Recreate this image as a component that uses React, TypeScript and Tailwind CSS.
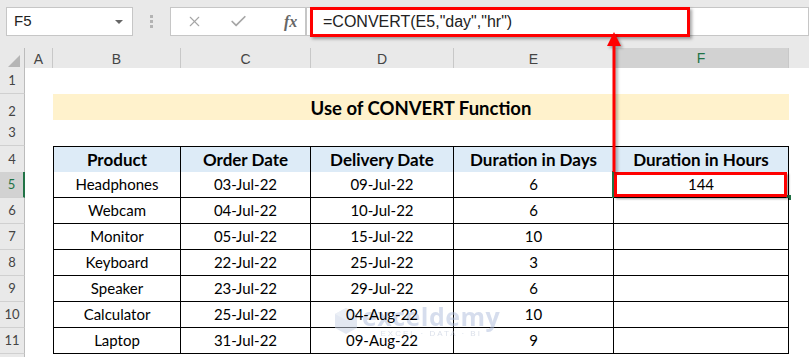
import { X, Check } from 'lucide-react';

const rows = [
    ['Headphones', '03-Jul-22', '09-Jul-22', '6', '144'],
    ['Webcam', '04-Jul-22', '10-Jul-22', '6', ''],
    ['Monitor', '05-Jul-22', '15-Jul-22', '10', ''],
    ['Keyboard', '22-Jul-22', '25-Jul-22', '3', ''],
    ['Speaker', '23-Jul-22', '29-Jul-22', '6', ''],
    ['Calculator', '25-Jul-22', '04-Aug-22', '10', ''],
    ['Laptop', '31-Jul-22', '09-Aug-22', '9', ''],
];

const cols = ['A', 'B', 'C', 'D', 'E', 'F'];

const grid = 'grid grid-cols-[25px_28px_128px_130px_143px_160px_175px_1fr]';

function RowHead({ n, active }: { n?: number; active?: boolean }) {
    return (
        <div
            className={`flex items-end justify-center pb-[3px] border-b border-[#d0d0d0] text-[13px] ${
                active
                    ? 'bg-[#d2d2d2] border-r-2 border-r-[#217346] text-[#217346]'
                    : 'bg-[#e9e9e9] border-r border-r-[#bcbcbc] text-[#444]'
            }`}
        >
            {n}
        </div>
    );
}

export default function App() {
    return (
        <div
            className="relative w-[809px] h-[357px] overflow-hidden bg-[#e9e9e9]"
            style={{ fontFamily: '"Liberation Sans", Arial, sans-serif' }}
        >
            {/* formula bar */}
            <div className="h-[48px] flex items-start pt-[7px] pl-[6px]">
                <div className="w-[127px] h-[29px] bg-white border border-[#c6c6c6] flex items-center justify-between pl-[7px] pr-[9px]">
                    <span className="text-[15px] text-[#222]">F5</span>
                    <span className="w-0 h-0 border-l-[4px] border-r-[4px] border-t-[4px] border-l-transparent border-r-transparent border-t-[#666]"></span>
                </div>
                <div className="w-[37px] h-[29px] flex flex-col items-center justify-center gap-[2px]">
                    <span className="w-[3px] h-[3px] bg-[#b3b3b3]"></span>
                    <span className="w-[3px] h-[3px] bg-[#b3b3b3]"></span>
                    <span className="w-[3px] h-[3px] bg-[#b3b3b3]"></span>
                </div>
                <div className="w-[136px] h-[29px] bg-white border border-[#c6c6c6] flex items-center pl-[15px] gap-[26px]">
                    <X size={17} strokeWidth={1.6} className="text-[#a6a6a6]" />
                    <Check size={19} strokeWidth={2.2} className="text-[#a6a6a6]" />
                    <span
                        className="text-[16px] italic font-bold text-[#666] ml-[10px]"
                        style={{ fontFamily: '"Liberation Serif", serif' }}
                    >
                        fx
                    </span>
                </div>
                <div className="flex-1 h-[29px] bg-white border border-[#c6c6c6] flex items-center pl-[16px] text-[16px] text-[#222]">
                    =CONVERT(E5,"day","hr")
                </div>
            </div>

            {/* column headers */}
            <div className={`${grid} h-[20px] text-[14px] text-[#444]`}>
                <div className="border-r border-[#bcbcbc] flex items-end justify-end">
                    <svg width="14" height="14" className="mr-[3px] mb-[3px]">
                        <polygon points="13,1 13,13 1,13" fill="#b5b5b5" />
                    </svg>
                </div>
                {cols.map((c) => (
                    <div
                        key={c}
                        className={`flex items-center justify-center border-r border-[#c8c8c8] ${
                            c === 'F' ? 'bg-[#d2d2d2] border-b-2 border-b-[#217346] text-[#217346]' : ''
                        }`}
                    >
                        {c}
                    </div>
                ))}
                <div></div>
            </div>

            {/* watermark, sits under the sheet text */}
            <div className="absolute left-[334px] top-[304px] flex items-center gap-[4px] opacity-50 pointer-events-none z-10">
                <svg width="24" height="28" viewBox="0 0 24 28">
                    <polygon points="12,1 23,7 23,21 12,27 1,21 1,7" fill="#c9d3e6" />
                    <polygon points="12,1 23,7 12,13 1,7" fill="#dbe2ef" />
                </svg>
                <div className="flex flex-col items-center leading-none">
                    <span
                        className="text-[25px] font-bold text-[#aebddc] tracking-[0.5px]"
                        style={{ fontFamily: '"Open Sans", sans-serif' }}
                    >
                        exceldemy
                    </span>
                    <span className="text-[8px] text-[#b8c2d6] tracking-[2px] mt-[1px]">EXCEL · DATA · BI</span>
                </div>
            </div>

            {/* sheet */}
            <div style={{ fontFamily: 'Lato, "Liberation Sans", sans-serif' }} className="text-black">
                <div className={`${grid} h-[26px]`}>
                    <RowHead n={1} />
                    <div className="col-span-7 bg-white"></div>
                </div>
                <div className={`${grid} h-[26px]`}>
                    <RowHead n={2} />
                    <div className="bg-white"></div>
                    <div className="col-span-5 bg-[#fff2cc] border-b-[3px] border-[#a4b6dd] flex items-center justify-center text-[18.5px] font-bold pt-[1px]">
                        Use of CONVERT Function
                    </div>
                    <div className="bg-white"></div>
                </div>
                <div className={`${grid} h-[26px]`}>
                    <RowHead n={3} />
                    <div className="col-span-7 bg-white"></div>
                </div>
                <div className={`${grid} h-[26px]`}>
                    <RowHead n={4} />
                    <div className="bg-white"></div>
                    {['Product', 'Order Date', 'Delivery Date', 'Duration in Days', 'Duration in Hours'].map((h, i) => (
                        <div
                            key={h}
                            className={`bg-[#ddebf7] border-t border-r border-b border-black flex items-center justify-center text-[17px] font-bold ${
                                i === 0 ? 'border-l' : ''
                            }`}
                        >
                            {h}
                        </div>
                    ))}
                    <div className="bg-white"></div>
                </div>
                {rows.map((r, ri) => (
                    <div key={ri} className={`${grid} h-[26px]`}>
                        <RowHead n={ri + 5} active={ri === 0} />
                        <div className="bg-white"></div>
                        {r.map((v, i) => (
                            <div
                                key={i}
                                className={`relative bg-white border-r border-b border-black flex items-center justify-center text-[15px] ${
                                    i === 0 ? 'border-l' : ''
                                }`}
                            >
                                <span className="relative z-20">{v}</span>
                                {ri === 0 && i === 4 && (
                                    <>
                                        <span className="absolute left-[-2px] top-[-1px] w-[2px] h-[27px] bg-[#217346]"></span>
                                        <span className="absolute right-[-3px] bottom-[-3px] w-[5px] h-[5px] bg-[#217346]"></span>
                                        <span className="absolute left-0 top-0 right-[1px] bottom-0 border-[3px] border-[#ff0000] shadow-[2px_2px_2px_rgba(0,0,0,0.35)] z-30"></span>
                                    </>
                                )}
                            </div>
                        ))}
                        <div className="bg-white"></div>
                    </div>
                ))}
                <div className={`${grid} h-[26px]`}>
                    <RowHead />
                    <div className="col-span-7 bg-white"></div>
                </div>
            </div>

            {/* formula callout box */}
            <div className="absolute left-[310px] top-[7px] w-[380px] h-[30px] border-[3px] border-[#ff0000] shadow-[2px_2px_3px_rgba(0,0,0,0.35)] z-30"></div>

            {/* arrow */}
            <svg className="absolute left-0 top-0 pointer-events-none z-30" width="809" height="357">
                <g style={{ filter: 'drop-shadow(2px 2px 1.5px rgba(0,0,0,0.35))' }}>
                    <line x1="614" y1="44" x2="614" y2="172" stroke="#ff0000" strokeWidth="3" />
                    <polygon points="614,32 607,46 621,46" fill="#ff0000" />
                </g>
            </svg>
        </div>
    );
}
